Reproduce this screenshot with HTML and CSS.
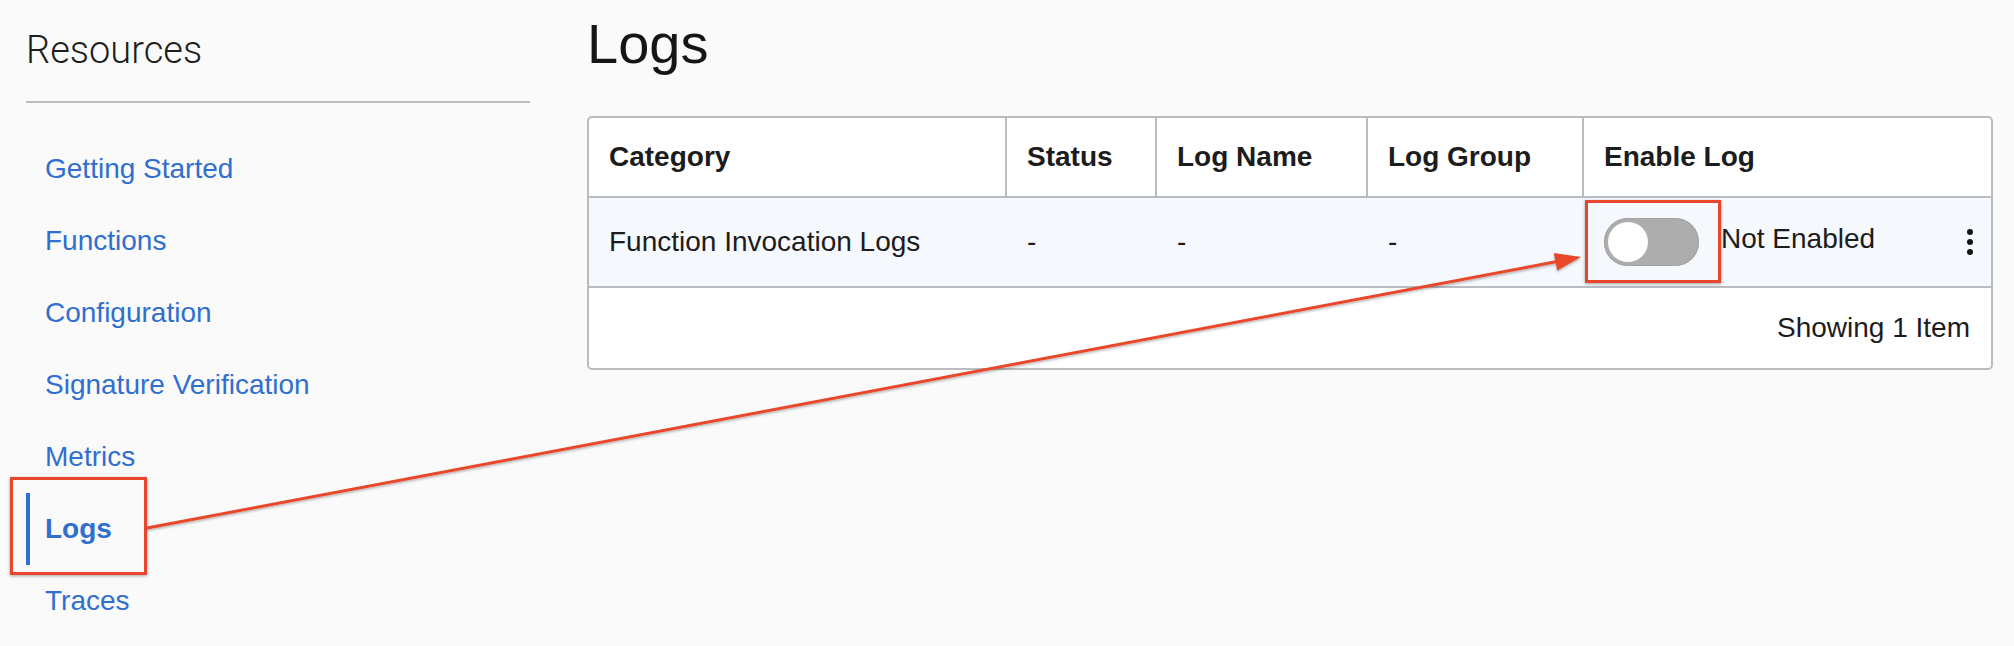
FILE: index.html
```html
<!DOCTYPE html>
<html lang="en">
<head>
<meta charset="utf-8">
<title>Logs</title>
<link rel="stylesheet" href="styles.css">
</head>
<body>
<div class="page">
  <aside class="sidebar">
    <h2 class="side-title">Resources</h2>
    <nav class="side-nav">
      <a class="nav-item" href="#">Getting Started</a>
      <a class="nav-item" href="#">Functions</a>
      <a class="nav-item" href="#">Configuration</a>
      <a class="nav-item" href="#">Signature Verification</a>
      <a class="nav-item" href="#">Metrics</a>
      <a class="nav-item active" href="#">Logs<span class="annot annot-nav"></span></a>
      <a class="nav-item" href="#">Traces</a>
    </nav>
  </aside>
  <main class="main">
    <h1 class="page-title">Logs</h1>
    <div class="table-wrap">
      <table class="logs-table">
        <colgroup>
          <col class="c-cat">
          <col class="c-status">
          <col class="c-name">
          <col class="c-group">
          <col class="c-enable">
        </colgroup>
        <thead>
          <tr>
            <th>Category</th>
            <th>Status</th>
            <th>Log Name</th>
            <th>Log Group</th>
            <th class="last">Enable Log</th>
          </tr>
        </thead>
        <tbody>
          <tr class="data-row">
            <td>Function Invocation Logs</td>
            <td>-</td>
            <td>-</td>
            <td>-</td>
            <td>
              <div class="enable-cell">
                <span class="toggle"><span class="knob"></span><span class="annot annot-toggle"></span></span>
                <span class="enable-label">Not Enabled</span>
                <span class="kebab"><i></i><i></i><i></i></span>
              </div>
            </td>
          </tr>
          <tr class="foot-row">
            <td colspan="5">Showing 1 Item</td>
          </tr>
        </tbody>
      </table>
    </div>
  </main>
</div>
<svg class="arrow" width="2014" height="646" viewBox="0 0 2014 646" aria-hidden="true">
  <defs>
    <filter id="sh" x="-5%" y="-50%" width="110%" height="200%">
      <feDropShadow dx="0" dy="1.5" stdDeviation="1.2" flood-color="#000" flood-opacity="0.3"/>
    </filter>
  </defs>
  <g filter="url(#sh)">
    <line x1="147" y1="528" x2="1557" y2="261.5" stroke="#e8472c" stroke-width="3"/>
    <polygon points="1581,257 1557.2,270.6 1553.8,253" fill="#e8472c"/>
  </g>
</svg>
</body>
</html>
```

FILE: styles.css
```css
* { box-sizing: border-box; }

html, body {
  margin: 0;
  padding: 0;
  background: #fafafa;
  font-family: "Liberation Sans", Arial, sans-serif;
  color: #1c1c1c;
}

.page {
  display: flex;
  gap: 57px;
  padding-left: 26px;
  width: 2014px;
  height: 646px;
  overflow: hidden;
}

.sidebar {
  width: 504px;
  flex: none;
}

.side-title {
  margin: 0;
  padding-top: 28px;
  padding-bottom: 29px;
  font-family: "Roboto", "Liberation Sans", sans-serif;
  font-weight: 300;
  font-size: 38px;
  line-height: 44px;
  color: #1e1e1e;
  border-bottom: 2px solid #b8bbc0;
}

.side-nav {
  display: flex;
  flex-direction: column;
  padding-top: 30px;
}

.nav-item {
  position: relative;
  display: block;
  height: 72px;
  line-height: 72px;
  padding-left: 19px;
  font-size: 28px;
  color: #306fce;
  text-decoration: none;
}

.nav-item.active {
  font-weight: bold;
  border-left: 4px solid #306fce;
  padding-left: 15px;
}

.annot {
  position: absolute;
  border: 3px solid #e8472c;
  box-shadow: 0 1px 3px rgba(0, 0, 0, 0.35);
  pointer-events: none;
}

.annot-nav {
  left: -20px;
  top: -16px;
  width: 137px;
  height: 98px;
}

.main {
  flex: 1;
  padding-top: 12px;
  padding-right: 21px;
}

.page-title {
  margin: 0 0 40px 0;
  font-size: 56px;
  line-height: 64px;
  font-weight: normal;
  color: #161513;
}

.table-wrap {
  border: 2px solid #b9bcc1;
  border-radius: 5px;
  background: #ffffff;
  overflow: hidden;
}

.logs-table {
  width: 100%;
  border-collapse: separate;
  border-spacing: 0;
  table-layout: fixed;
  font-size: 28px;
  color: #1c1c1c;
}

.c-cat { width: 418px; }
.c-status { width: 150px; }
.c-name { width: 211px; }
.c-group { width: 216px; }

.logs-table th {
  height: 80px;
  padding: 0 0 0 20px;
  text-align: left;
  font-weight: bold;
  vertical-align: middle;
  border-right: 2px solid #b9bcc1;
  border-bottom: 2px solid #b9bcc1;
}

.logs-table th.last { border-right: none; }

.data-row td {
  height: 90px;
  padding: 0 0 0 20px;
  background: #f5f8fc;
  vertical-align: middle;
  border-bottom: 2px solid #b9bcc1;
}

.enable-cell {
  display: flex;
  align-items: center;
  padding-right: 18px;
}

.toggle {
  position: relative;
  flex: none;
  width: 95px;
  height: 48px;
  border-radius: 24px;
  background: #adadad;
  box-shadow: inset 0 0 0 1px #a3a3a3;
}

.knob {
  position: absolute;
  left: 4px;
  top: 4px;
  width: 40px;
  height: 40px;
  border-radius: 50%;
  background: #ffffff;
}

.annot-toggle {
  left: -19px;
  top: -18px;
  width: 136px;
  height: 83px;
}

.enable-label {
  margin-left: 22px;
  margin-bottom: 6px;
  color: #1c1c1c;
}

.kebab {
  margin-left: auto;
  display: flex;
  flex-direction: column;
  gap: 4px;
  width: 6px;
}

.kebab i {
  display: block;
  width: 6px;
  height: 6px;
  border-radius: 50%;
  background: #161513;
}

.foot-row td {
  height: 80px;
  padding: 0 21px 0 0;
  text-align: right;
  vertical-align: middle;
  color: #1c1c1c;
}

.arrow {
  position: absolute;
  left: 0;
  top: 0;
  pointer-events: none;
}
```
